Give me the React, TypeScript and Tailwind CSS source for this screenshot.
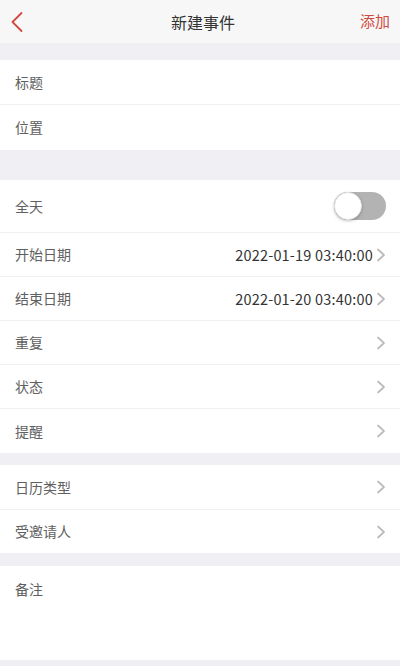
const font = { fontFamily: '"Noto Sans CJK SC", "Noto Sans", sans-serif' };

function Chevron() {
  return (
    <svg width="10" height="14" viewBox="0 0 10 14" className="shrink-0">
      <path d="M2 1.5 L8 7 L2 12.5" fill="none" stroke="#bbbbbb" strokeWidth="1.7" strokeLinecap="round" strokeLinejoin="round" />
    </svg>
  );
}

function Row({ label, value, arrow, last, h = "h-[44px]" }: { label: string; value?: string; arrow?: boolean; last?: boolean; h?: string }) {
  return (
    <div className={`flex items-center justify-between pl-[15px] pr-[14px] ${h} ${last ? "" : "border-b border-[#f1f1f3]"}`}>
      <span className="text-[14px] text-[#606060]">{label}</span>
      <div className="flex items-center gap-[3px]">
        {value ? <span className="text-[14.5px] text-[#333] tracking-[0.2px]">{value}</span> : null}
        {arrow ? <Chevron /> : null}
      </div>
    </div>
  );
}

export default function App() {
  return (
    <div className="w-[400px] h-[666px] overflow-hidden bg-[#efeff4]" style={font}>
      <header className="flex h-[43px] items-center justify-between bg-[#f7f7f8] px-[10px]">
        <svg width="14" height="22" viewBox="0 0 14 22">
          <path d="M11.5 2 L2.5 11 L11.5 20" fill="none" stroke="#d2493f" strokeWidth="1.8" strokeLinecap="round" strokeLinejoin="round" />
        </svg>
        <span className="text-[16px] text-[#333] pl-[22px]">新建事件</span>
        <span className="text-[15px] text-[#d2493f]">添加</span>
      </header>

      <div className="h-[17px]" />

      <section className="bg-white">
        <Row label="标题" h="h-[45px]" />
        <Row label="位置" h="h-[45px]" last />
      </section>

      <div className="h-[30px]" />

      <section className="bg-white">
        <div className="flex h-[53px] items-center justify-between border-b border-[#f1f1f3] pl-[15px] pr-[14px]">
          <span className="text-[14px] text-[#606060]">全天</span>
          <div className="relative h-[28px] w-[52px] rounded-full bg-[#b3b3b3]">
            <div className="absolute left-0 top-0 h-[28px] w-[28px] rounded-full border border-[#e3e3e3] bg-white shadow-[0_1px_3px_rgba(0,0,0,0.25)]" />
          </div>
        </div>
        <Row label="开始日期" value="2022-01-19 03:40:00" arrow />
        <Row label="结束日期" value="2022-01-20 03:40:00" arrow />
        <Row label="重复" arrow />
        <Row label="状态" arrow />
        <Row label="提醒" arrow last />
      </section>

      <div className="h-[12px]" />

      <section className="bg-white">
        <Row label="日历类型" h="h-[45px]" arrow />
        <Row label="受邀请人" h="h-[43px]" arrow last />
      </section>

      <div className="h-[13px]" />

      <section className="h-[94px] bg-white px-[15px] pt-[10px]">
        <span className="text-[14px] text-[#606060]">备注</span>
      </section>
    </div>
  );
}
